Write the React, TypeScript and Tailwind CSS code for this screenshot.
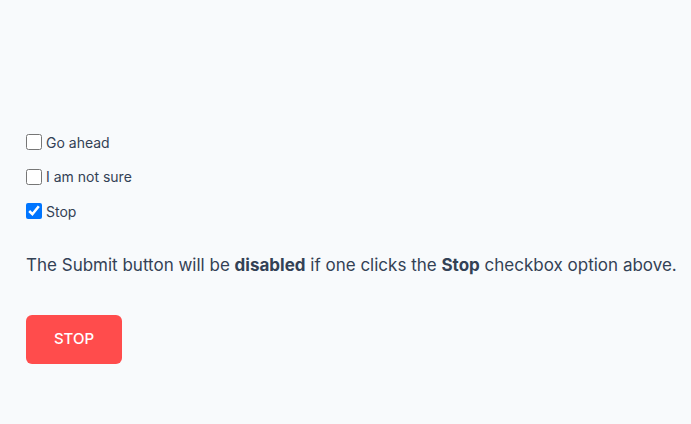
import { useState } from "react";

const OPTIONS = ["Go ahead", "I am not sure", "Stop"];

export default function App() {
  const [checked, setChecked] = useState<Record<string, boolean>>({ Stop: true });
  const stopped = !!checked["Stop"];

  return (
    <div className="min-h-[424px] bg-[#f8fafc] px-[26px] pt-[133px] font-['Inter',sans-serif] text-[#334155]">
      <div className="flex flex-col gap-[16.5px]">
        {OPTIONS.map((o) => (
          <label key={o} className="flex h-[18px] items-center gap-[4px] text-[14px]">
            <input
              type="checkbox"
              className="m-0 h-[16px] w-[16px]"
              checked={!!checked[o]}
              onChange={(e) => setChecked({ ...checked, [o]: e.target.checked })}
            />
            {o}
          </label>
        ))}
      </div>
      <p className="mt-[33px] whitespace-nowrap text-[17px] leading-[25px]">
        The Submit button will be <b className="font-bold">disabled</b> if one clicks the{" "}
        <b className="font-bold">Stop</b> checkbox option above.
      </p>
      <button
        disabled={stopped}
        className="mt-[37px] h-[49px] w-[96px] rounded-[6px] bg-[#ff4c4c] text-[15px] font-medium uppercase text-white"
      >
        {stopped ? "Stop" : "Submit"}
      </button>
    </div>
  );
}
